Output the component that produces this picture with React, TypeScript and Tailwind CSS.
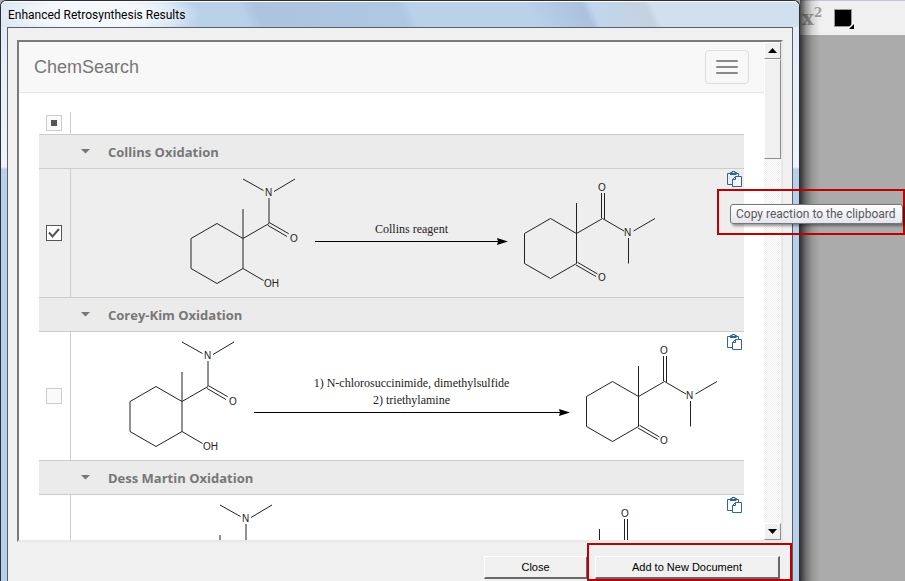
import { useState } from "react";

type Reaction = { name: string; labels: string[]; arrow: number; checked: boolean };

const REACTIONS: Reaction[] = [
  { name: "Collins Oxidation", labels: ["Collins reagent"], arrow: 193, checked: true },
  {
    name: "Corey-Kim Oxidation",
    labels: ["1) N-chlorosuccinimide, dimethylsulfide", "2) triethylamine"],
    arrow: 316,
    checked: false,
  },
  { name: "Dess Martin Oxidation", labels: [], arrow: 239, checked: false },
];

const atom = "fill-[#222] stroke-none font-['Liberation_Sans',Arial,sans-serif] text-[10px]";

function Reactant() {
  return (
    <svg width="110" height="128" viewBox="0 0 110 128" className="shrink-0 fill-none stroke-[#222]" role="img" aria-label="Reactant">
      <path d="M27 54.5 53 69.5V99.5L27 114.5 1 99.5V69.5ZM53 69.5V40M53 69.5 79 54.5V29M73.5 21.5 53 10M84 22.5 105 10M79.5 53.7 98.7 64.7M77.8 56.3 97 67.5M53 99.5 73.5 111.5" />
      <text x="75" y="27" className={atom}>N</text>
      <text x="100" y="73" className={atom}>O</text>
      <text x="74" y="118" className={atom}>OH</text>
    </svg>
  );
}

function Product() {
  return (
    <svg width="133" height="128" viewBox="0 0 133 128" className="shrink-0 fill-none stroke-[#222]" role="img" aria-label="Product">
      <path d="M27.5 49.5 53.5 64.5V94.5L27.5 109.5 1.5 94.5V64.5ZM53.5 64.5V34M53.5 64.5 79.5 49.5M78.5 49V24M81.5 50V24M79.5 49.5 101 62M110.5 62 132 49.5M105.5 69V94.5M54.5 93.3 74.5 105M53 96 73 107.5" />
      <text x="75" y="22" className={atom}>O</text>
      <text x="101" y="67" className={atom}>N</text>
      <text x="75" y="112" className={atom}>O</text>
    </svg>
  );
}

function Arrow({ width, labels }: { width: number; labels: string[] }) {
  return (
    <div
      className="flex flex-col items-center font-['Liberation_Serif','Times_New_Roman',serif] text-xs leading-[17px] whitespace-nowrap text-[#222]"
      style={{ width }}
    >
      {labels.map((l) => (
        <span key={l}>{l}</span>
      ))}
      <svg width={width} height="8" aria-hidden="true">
        <path d={`M0 3.5H${width - 8}`} className="stroke-black" />
        <path d={`M${width - 11} 0 ${width} 3.5 ${width - 11} 7 ${width - 10} 3.5Z`} />
      </svg>
    </div>
  );
}

function CopyIcon() {
  return (
    <svg width="15" height="16" viewBox="0 0 15 16" className="block fill-none stroke-[#2f6595]" aria-hidden="true">
      <path d="M5 13.5H.5V2.5H11.5V5" />
      <path d="M3 3.5H9.5M3.5 3V1.5H5M9.5 3V1.5H8M5 .5H8V2.5H5Z" />
      <path d="M8.5 5.5H14.5V15.5H5.5V8.5ZM8.5 5.5V8.5H5.5" className="fill-white/40" />
    </svg>
  );
}

function Tick({ label, checked, mixed, onChange }: { label: string; checked: boolean; mixed?: boolean; onChange?: () => void }) {
  return (
    <span className="ml-[7px] grid w-4">
      <input
        type="checkbox"
        aria-label={label}
        checked={checked}
        onChange={onChange ?? (() => {})}
        ref={(el) => {
          if (el) el.indeterminate = !!mixed;
        }}
        className="col-start-1 row-start-1 size-4 appearance-none border border-[#ccc] bg-[#fafafa] checked:border-[#555] checked:bg-white"
      />
      {checked && (
        <svg width="16" height="16" viewBox="0 0 16 16" className="pointer-events-none col-start-1 row-start-1 fill-none stroke-[#555]" strokeWidth="2" aria-hidden="true">
          <path d="M3 7.5 6.5 11.5 13 4" />
        </svg>
      )}
      {mixed && <span className="pointer-events-none col-start-1 row-start-1 size-1.5 place-self-center bg-[#555]" />}
    </span>
  );
}

function Group({ reaction }: { reaction: Reaction }) {
  const [checked, setChecked] = useState(reaction.checked);
  return (
    <tbody>
      <tr>
        <th colSpan={2} scope="colgroup" className="h-[34px] border-b border-[#ccc] bg-[#ebebeb] p-0 text-left">
          <button type="button" className="flex items-center gap-[18px] pl-[42px] font-['Open_Sans','Noto_Sans',sans-serif] text-[13px] leading-5 font-bold text-[#777]">
            <svg width="9" height="5" viewBox="0 0 9 5" className="fill-[#777]" aria-hidden="true">
              <path d="M0 0H9L4.5 4.5Z" />
            </svg>
            {reaction.name}
          </button>
        </th>
      </tr>
      <tr className={checked ? "bg-[#eee]" : "bg-white"}>
        <td className="border-r border-b border-[#ccc] p-0">
          <Tick label={`Select ${reaction.name}`} checked={checked} onChange={() => setChecked(!checked)} />
        </td>
        <td className="border-b border-[#ccc] p-0">
          <div className="flex h-32 pr-0.5 pl-12">
            <div className="flex flex-1 items-center justify-center gap-[15px]">
              <Reactant />
              <Arrow width={reaction.arrow} labels={reaction.labels} />
              <Product />
            </div>
            <button type="button" aria-label="Copy reaction to the clipboard" className="self-start pt-0.5">
              <CopyIcon />
            </button>
          </div>
        </td>
      </tr>
    </tbody>
  );
}

function ScrollBar() {
  const face = "border border-t-white border-l-white border-r-[#8c8c8c] border-b-[#8c8c8c] bg-[#f0f0f0]";
  return (
    <div className="flex w-[17px] shrink-0 flex-col bg-[repeating-conic-gradient(#fff_0_25%,#efefef_0_50%)] bg-size-[2px_2px]">
      <button type="button" aria-label="Scroll up" className={`grid h-[17px] place-items-center ${face}`}>
        <svg width="9" height="5" aria-hidden="true"><path d="M0 5 4.5 0 9 5Z" /></svg>
      </button>
      <div className={`h-[100px] ${face}`} />
      <button type="button" aria-label="Scroll down" className={`mt-auto grid h-[17px] place-items-center ${face}`}>
        <svg width="9" height="5" aria-hidden="true"><path d="M0 0 4.5 5 9 0Z" /></svg>
      </button>
    </div>
  );
}

const winButton =
  "block h-[23px] border-t border-l border-r-2 border-b-2 border-t-white border-l-white border-r-[#696969] border-b-[#696969] bg-[#f0f0f0] font-['Liberation_Sans',Arial,sans-serif] text-[11px] leading-4 text-black";

export default function App() {
  return (
    <div className="relative flex h-screen overflow-hidden bg-[#ababab] font-[Roboto,'Noto_Sans',sans-serif]">
      <section
        aria-label="Enhanced Retrosynthesis Results"
        className="z-10 flex min-w-0 flex-1 flex-col rounded-t-md border-x border-t border-[#2b3038] bg-[linear-gradient(#e4edf6_0_30px,#eef4fa_166px,#b9d0e9_168px)]"
      >
        <header className="flex h-[26px] shrink-0 items-center rounded-t-md border-t border-white bg-[radial-gradient(ellipse_110px_26px_at_90px_12px,#f4f8fc_0_50%,transparent_100%),linear-gradient(65deg,#d5e3f1_0,#cfdfef_150px,#b9d0e9_185px,#b9d0e9_225px,#adc3de_238px,#aec8e2_368px,#bad1ea_380px,#bad1ea_485px,#abc1dc_536px,#c1d6ee_544px,#c4d2df_592px,#d0e0ef_600px)] pl-[7px]">
          <h1 className="text-xs leading-4 text-black">Enhanced Retrosynthesis Results</h1>
        </header>
        <div className="mr-1.5 ml-1.5 flex min-h-0 flex-1 flex-col border-x border-t border-[#56606e] bg-[#f0f0f0]">
          <main className="mt-3 mr-[9px] ml-[9px] flex min-h-0 flex-1 border-2 border-t-[#7b7b7b] border-r-[#e8e8e8] border-b-[#e8e8e8] border-l-[#7b7b7b] bg-white">
            <div className="min-w-0 flex-1 overflow-hidden">
              <nav className="flex h-[51px] items-center justify-between border-b border-[#e7e7e7] bg-[#f8f8f8] px-[15px]">
                <a href="#" className="font-['Liberation_Sans',Arial,sans-serif] text-lg text-[#777]">ChemSearch</a>
                <button type="button" aria-label="Toggle navigation" className="flex h-[34px] w-11 flex-col items-center justify-center gap-1 rounded border border-[#ddd]">
                  <span className="h-0.5 w-[22px] rounded-[1px] bg-[#888]" />
                  <span className="h-0.5 w-[22px] rounded-[1px] bg-[#888]" />
                  <span className="h-0.5 w-[22px] rounded-[1px] bg-[#888]" />
                </button>
              </nav>
              <div className="px-5 pt-[19px]">
                <table className="w-full table-fixed border-separate border-spacing-0">
                  <thead>
                    <tr>
                      <th scope="col" className="h-[23px] w-8 border-r border-b border-[#ccc] p-0">
                        <Tick label="Select all reactions" checked={false} mixed />
                      </th>
                      <th scope="col" aria-label="Reaction" className="border-b border-[#ccc] p-0" />
                    </tr>
                  </thead>
                  {REACTIONS.map((r) => (
                    <Group key={r.name} reaction={r} />
                  ))}
                </table>
              </div>
            </div>
            <ScrollBar />
          </main>
          <footer className="flex h-[39px] shrink-0 justify-end gap-[7px] pt-3.5 pr-3">
            <button type="button" className={`w-[104px] ${winButton}`}>Close</button>
            <div className="relative h-[23px]">
              <button type="button" className={`w-[185px] ${winButton}`}>Add to New Document</button>
              <span className="pointer-events-none absolute -top-[13px] -right-3 -bottom-0.5 -left-2 border-2 border-[#c00000]" />
            </div>
          </footer>
        </div>
      </section>

      <aside className="w-[105px] shrink-0">
        <div className="flex h-[35px] items-start border-t border-[#c3c5d8] bg-[#f0f0f0] pt-[7px] pl-0.5 text-[#a0a0a0]">
          <button type="button" aria-label="Superscript" className="flex w-8 items-start font-['DejaVu_Serif',serif] font-bold">
            <span className="text-xl leading-5">x</span>
            <span className="text-xs leading-[10px]">2</span>
          </button>
          <button type="button" aria-label="Colour" className="relative mt-px size-[18px] border border-[#999] bg-black">
            <svg width="6" height="6" className="absolute -right-[3px] -bottom-[3px]" aria-hidden="true">
              <path d="M0 6V5L5 0H6V6Z" className="fill-white" />
              <path d="M1 6 6 1V6Z" />
            </svg>
          </button>
        </div>
      </aside>
      <div className="pointer-events-none absolute top-0 right-0 bottom-0 w-[105px] bg-[linear-gradient(to_right,rgba(0,0,0,.7),rgba(0,0,0,.35)_6px,rgba(0,0,0,.12)_12px,transparent_20px)]" />

      <div className="absolute top-[189px] right-0 z-20 flex h-[46px] w-[188px] items-center border-2 border-[#c00000] pt-1 pl-[11px]">
        <div role="tooltip" className="flex-1 rounded-[3px] border border-[#767676] bg-linear-to-b from-white to-[#e5e5f0] pl-[5px] text-xs leading-[18px] whitespace-nowrap text-[#575757] shadow-[2px_2px_3px_rgba(0,0,0,.4)]">
          Copy reaction to the clipboard
        </div>
      </div>
    </div>
  );
}
